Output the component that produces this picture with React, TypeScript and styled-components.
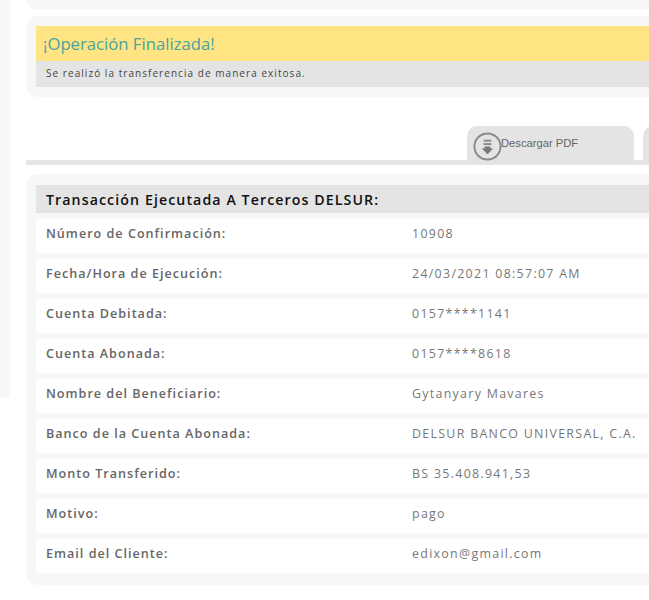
import React from 'react';
import styled, { createGlobalStyle } from 'styled-components';

const GlobalStyle = createGlobalStyle`
  html, body {
    margin: 0;
    padding: 0;
    background: #ffffff;
    overflow: hidden;
  }
  body {
    font-family: "Open Sans", "Liberation Sans", sans-serif;
  }
`;

const Page = styled.div`
  display: flex;
  align-items: flex-start;
  width: 649px;
  height: 600px;
  overflow: hidden;
`;

const Sidebar = styled.aside`
  flex: 0 0 10px;
  height: 398px;
  background: #f7f7f6;
`;

const Main = styled.main`
  flex: 0 0 720px;
  margin-left: 16px;
`;

const TopPanel = styled.div`
  height: 9px;
  background: #f7f7f6;
  border-radius: 0 0 12px 12px;
`;

const Panel = styled.section`
  background: #f7f7f6;
  border-radius: 12px;
  padding: 10px;
`;

const NoticePanel = styled(Panel)`
  margin-top: 7px;
`;

const NoticeTitle = styled.h2`
  margin: 0;
  height: 35px;
  padding-left: 7px;
  background: #ffe484;
  color: #4aa39f;
  font-size: 16.7px;
  font-weight: 400;
  line-height: 36px;
`;

const NoticeText = styled.p`
  margin: 0;
  height: 26px;
  padding-left: 10px;
  background: #e4e4e4;
  color: #444444;
  font-size: 10px;
  letter-spacing: 1.05px;
  line-height: 24px;
`;

const TabBar = styled.div`
  display: flex;
  gap: 9px;
  margin-top: 29px;
  padding-left: 441px;
  border-bottom: 5px solid #e6e6e6;
`;

const Tab = styled.div`
  flex: 0 0 167px;
  display: flex;
  align-items: flex-start;
  height: 39px;
  margin-bottom: -5px;
  padding: 6px 0 0 6px;
  box-sizing: border-box;
  background: #e4e4e4;
  border-radius: 10px 10px 0 0;
  color: #666666;
  font-family: "Liberation Sans", Arial, sans-serif;
  font-size: 11.2px;
`;

const TabLabel = styled.span`
  line-height: 16px;
  margin: 3px 0 0 -1px;
`;

const DetailPanel = styled(Panel)`
  margin-top: 9px;
  padding-top: 11px;
  padding-bottom: 12px;
`;

const DetailHeader = styled.h3`
  margin: 0 0 6px;
  height: 28px;
  padding-left: 10px;
  background: #e4e4e4;
  color: #111111;
  font-size: 14.2px;
  font-weight: 600;
  letter-spacing: 1.08px;
  line-height: 29px;
`;

const Rows = styled.div`
  display: grid;
  gap: 6px;
`;

const Row = styled.div`
  display: grid;
  grid-template-columns: 365px 1fr;
  height: 34px;
  padding-left: 10px;
  background: #ffffff;
  line-height: 29px;
`;

const Label = styled.span`
  color: #666666;
  font-size: 12.6px;
  font-weight: 600;
  letter-spacing: 1px;
`;

const Value = styled.span`
  padding-left: 1px;
  color: #777777;
  font-size: 12.4px;
  letter-spacing: 1.3px;
`;

const DownloadIcon = () => (
  <svg width="29" height="29" viewBox="0 0 30 30" aria-hidden="true">
    <circle cx="15" cy="15" r="13.5" fill="#e4e4e4" stroke="#8a8a8a" strokeWidth="2" />
    <rect x="11" y="8" width="8" height="2" fill="#8a8a8a" />
    <rect x="11" y="11.5" width="8" height="2" fill="#8a8a8a" />
    <path d="M12 15h6v2h3l-6 6-6-6h3z" fill="#777777" />
  </svg>
);

const details: [string, string][] = [
  ['Número de Confirmación:', '10908'],
  ['Fecha/Hora de Ejecución:', '24/03/2021 08:57:07 AM'],
  ['Cuenta Debitada:', '0157****1141'],
  ['Cuenta Abonada:', '0157****8618'],
  ['Nombre del Beneficiario:', 'Gytanyary Mavares'],
  ['Banco de la Cuenta Abonada:', 'DELSUR BANCO UNIVERSAL, C.A.'],
  ['Monto Transferido:', 'BS 35.408.941,53'],
  ['Motivo:', 'pago'],
  ['Email del Cliente:', 'edixon@gmail.com'],
];

const App: React.FC = () => (
  <Page>
    <GlobalStyle />
    <Sidebar />
    <Main>
      <TopPanel />
      <NoticePanel>
        <NoticeTitle>¡Operación Finalizada!</NoticeTitle>
        <NoticeText>Se realizó la transferencia de manera exitosa.</NoticeText>
      </NoticePanel>

      <TabBar>
        <Tab>
          <DownloadIcon />
          <TabLabel>Descargar PDF</TabLabel>
        </Tab>
        <Tab />
      </TabBar>

      <DetailPanel>
        <DetailHeader>Transacción Ejecutada A Terceros DELSUR:</DetailHeader>
        <Rows>
          {details.map(([label, value]) => (
            <Row key={label}>
              <Label>{label}</Label>
              <Value>{value}</Value>
            </Row>
          ))}
        </Rows>
      </DetailPanel>
    </Main>
  </Page>
);

export default App;
